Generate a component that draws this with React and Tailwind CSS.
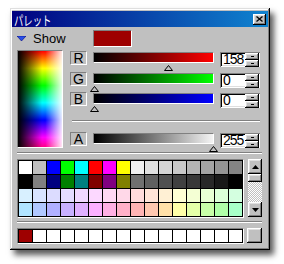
const ROW1 = ["#ffffff","#c0c0c0","#0000ff","#00ff00","#00ffff","#ff0000","#ff00ff","#ffff00","#f0f0f0","#e0e0e0","#d4d4d4","#c8c8c8","#b4b4b4","#a4a4a4","#949494","#848484"];
const ROW2 = ["#000000","#808080","#000080","#008000","#008080","#800000","#800080","#808000","#707070","#606060","#505050","#404040","#383838","#282828","#181818","#000000"];
const ROW3 = ["#d8f0ff","#d8e4ff","#dcdcff","#e4dcff","#f0d8ff","#fcd8ff","#ffd8f4","#ffd8e8","#ffdcdc","#ffe4d8","#fff0d4","#ffffd4","#f4ffd4","#e8ffd4","#dcffd8","#d4ffe0"];
const ROW4 = ["#b0e4ff","#b0c8ff","#b0b0ff","#c8b0ff","#e0b0ff","#fcb0ff","#ffb0e4","#ffb0c8","#ffb4b4","#ffc8b0","#ffe0a8","#ffffa8","#e4ffa8","#c8ffa8","#b0ffa8","#a8ffc8"];
const PALETTE = [...ROW1, ...ROW2, ...ROW3, ...ROW4];
const CUSTOM = ["#9e0000", ...Array(15).fill("#ffffff")];

const RAISED = "shadow-[inset_-1px_-1px_#000,inset_1px_1px_#fff,inset_-2px_-2px_#808080,inset_2px_2px_#dfdfdf]";
const FIELD = "shadow-[inset_1px_1px_#808080,inset_-1px_-1px_#fff,inset_2px_2px_#000,inset_-2px_-2px_#dfdfdf]";
const SUNKEN = "border border-t-[#808080] border-l-[#808080] border-b-white border-r-white";

function Groove({ className = "" }) {
  return <div className={"h-0 border-t border-t-[#808080] border-b border-b-white " + className} />;
}

function Marker({ value }) {
  const left = Math.round((value / 255) * 119) - 4;
  return (
    <svg className="absolute top-[12px]" style={{ left }} width="9" height="6" viewBox="0 0 9 6">
      <polygon points="4.5,0.5 8.5,5.5 0.5,5.5" fill="#c0c0c0" stroke="#000" strokeWidth="1" />
    </svg>
  );
}

function Spinner() {
  return (
    <div className="flex w-[14px] flex-col self-center">
      <div className={"flex h-[7px] items-center justify-center bg-[#c0c0c0] " + RAISED}>
        <div className="h-px w-[3px] bg-black" />
      </div>
      <div className={"flex h-[7px] items-center justify-center bg-[#c0c0c0] " + RAISED}>
        <div className="h-px w-[3px] bg-black" />
      </div>
    </div>
  );
}

function ChannelRow({ label, grad, value, height }) {
  return (
    <div className={"flex items-start " + height}>
      <div className={"mt-[1px] flex h-[14px] w-[17px] items-center justify-center text-[14px] leading-none text-black " + SUNKEN}>
        {label}
      </div>
      <div className={"relative ml-[6px] mt-[2px] h-[11px] w-[121px] " + SUNKEN}>
        <div className={"h-full w-full " + grad} />
        <Marker value={value} />
      </div>
      <div className={"ml-[6px] mt-[2px] flex h-[15px] w-[40px] items-center bg-white pl-[2px] pr-[1px] " + FIELD}>
        <div className="flex-1 pl-[1px] text-[14px] leading-[15px] tracking-[-1px] text-black">{value}</div>
        <Spinner />
      </div>
    </div>
  );
}

function Arrow({ up }) {
  return (
    <svg width="7" height="4" viewBox="0 0 7 4">
      {up ? <polygon points="3.5,0 7,4 0,4" fill="#000" /> : <polygon points="0,0 7,0 3.5,4" fill="#000" />}
    </svg>
  );
}

export default function App() {
  return (
    <div className="h-[264px] w-[284px] bg-white pl-[10px] pt-[8px] font-['Liberation_Sans',sans-serif]">
      <div className="h-[242px] w-[260px] bg-[#c0c0c0] px-[2px] pt-[3px] shadow-[inset_-1px_-1px_#000,inset_1px_1px_#dfdfdf,inset_-2px_-2px_#808080,inset_2px_2px_#fff,4px_5px_6px_rgba(0,0,0,0.65)]">
        {/* Title bar */}
        <div className="flex h-[16px] items-center justify-between bg-[linear-gradient(to_right,#000080,#1084d0)] pl-[2px] pr-[2px]">
          <span className="inline-block origin-left scale-x-[0.72] font-['Noto_Sans_CJK_JP',sans-serif] text-[13px] leading-none text-white">
            パレット
          </span>
          <div className={"flex h-[11px] w-[13px] items-center justify-center bg-[#c0c0c0] " + RAISED}>
            <svg width="7" height="6" viewBox="0 0 7 6">
              <path d="M0.5 0.5 L6.5 5.5 M6.5 0.5 L0.5 5.5" stroke="#000" strokeWidth="1.3" />
            </svg>
          </div>
        </div>

        <div className="pl-[5px] pr-[6px]">
          {/* Show row */}
          <div className="mt-[3px] flex h-[17px] items-center">
            <div className="flex w-[76px] items-center gap-[7px]">
              <svg width="9" height="5" viewBox="0 0 9 5">
                <polygon points="0,0 9,0 4.5,5" fill="#2850e8" stroke="#00007a" strokeWidth="0.6" />
              </svg>
              <span className="text-[13px] leading-none text-black">Show</span>
            </div>
            <div className={"h-[17px] w-[39px] bg-[#9e0000] " + SUNKEN} />
          </div>

          {/* Main */}
          <div className="mt-[3px] flex h-[98px]">
            <div className={"h-[98px] w-[46px] " + SUNKEN}>
              <div className="h-full w-full bg-[linear-gradient(to_right,#000_0%,rgba(0,0,0,0)_55%,rgba(255,255,255,0)_62%,rgba(255,255,255,0.9)_100%),linear-gradient(to_bottom,#f00,#ff0_18%,#0f0_36%,#0ff_54%,#00f_72%,#f0f_90%,#f08_100%)]" />
            </div>
            <div className="ml-[7px] w-[190px]">
              <ChannelRow label="R" value={158} height="h-[21px]" grad="bg-[linear-gradient(to_right,#000,#ff0000)]" />
              <ChannelRow label="G" value={0} height="h-[20px]" grad="bg-[linear-gradient(to_right,#000,#00ff00)]" />
              <ChannelRow label="B" value={0} height="h-[20px]" grad="bg-[linear-gradient(to_right,#000,#0000ff)]" />
              <Groove className="ml-[2px] mt-[9px]" />
              <div className="mt-[9px]">
                <ChannelRow label="A" value={255} height="h-[17px]" grad="bg-[linear-gradient(to_right,#000,#f4f4f4)]" />
              </div>
            </div>
          </div>

          <Groove className="mt-[4px]" />

          {/* Palette grid */}
          <div className="mt-[5px] flex items-start">
            <div className={SUNKEN}>
              <div className="grid grid-cols-[repeat(16,13px)] gap-px bg-black p-px">
                {PALETTE.map((c, i) => (
                  <div key={i} className="h-[13px] w-[13px]" style={{ backgroundColor: c }} />
                ))}
              </div>
            </div>
            <div className="ml-[4px] flex h-[58px] w-[14px] flex-col">
              <div className={"flex h-[15px] items-center justify-center bg-[#c0c0c0] " + RAISED}>
                <Arrow up />
              </div>
              <div className={"h-[8px] bg-[#c0c0c0] " + RAISED} />
              <div className="flex-1 bg-[repeating-conic-gradient(#c0c0c0_0_25%,#ffffff_0_50%)] bg-[length:2px_2px]" />
              <div className={"flex h-[15px] items-center justify-center bg-[#c0c0c0] " + RAISED}>
                <Arrow />
              </div>
            </div>
          </div>

          <Groove className="mt-[3px]" />

          {/* Custom colours */}
          <div className="mt-[5px] flex items-start">
            <div className={SUNKEN}>
              <div className="grid grid-cols-[repeat(16,13px)] gap-px bg-black p-px">
                {CUSTOM.map((c, i) => (
                  <div key={i} className="h-[12px] w-[13px]" style={{ backgroundColor: c }} />
                ))}
              </div>
            </div>
            <div className={"ml-[3px] h-[15px] w-[15px] bg-[#c0c0c0] " + RAISED} />
          </div>
        </div>
      </div>
    </div>
  );
}
